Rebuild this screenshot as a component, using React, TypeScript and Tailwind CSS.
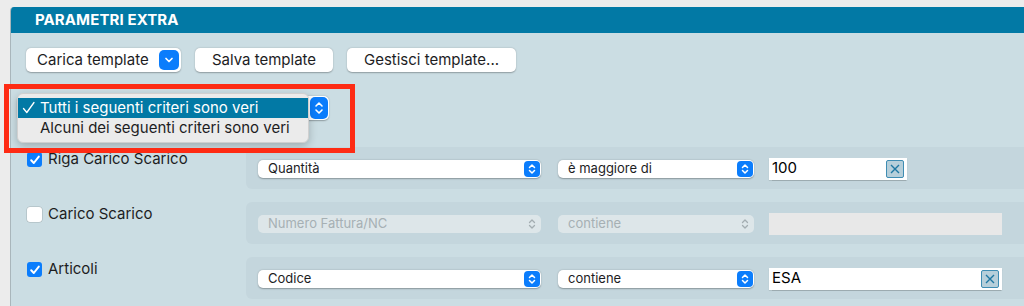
import type { ReactNode } from "react"

const font = { fontFamily: "Inter, 'Liberation Sans', sans-serif" }

function Stepper({ disabled = false }: { disabled?: boolean }) {
  if (disabled) {
    return (
      <svg width="16" height="16" viewBox="0 0 16 16" className="shrink-0">
        <path d="M5.5 6.5 8 4l2.5 2.5M5.5 9.5 8 12l2.5-2.5" fill="none" stroke="#a3adb1" strokeWidth="1.3" strokeLinecap="round" strokeLinejoin="round" />
      </svg>
    )
  }
  return (
    <div className="flex h-[16px] w-[16px] shrink-0 items-center justify-center rounded-[4px] bg-[#0b7dfc]">
      <svg width="16" height="16" viewBox="0 0 16 16">
        <path d="M5.5 6.5 8 4l2.5 2.5M5.5 9.5 8 12l2.5-2.5" fill="none" stroke="#fff" strokeWidth="1.5" strokeLinecap="round" strokeLinejoin="round" />
      </svg>
    </div>
  )
}

function Select({ label, width, disabled = false }: { label: string; width: string; disabled?: boolean }) {
  return (
    <div
      className={`flex h-[18px] ${width} shrink-0 items-center justify-between rounded-[5px] pl-[10px] pr-[1px] text-[13px] ${
        disabled ? "bg-[#dde6e9] text-[#a6b0b4]" : "bg-white text-[#1d1d1f] shadow-[0_0.5px_1.5px_rgba(0,0,0,0.3)]"
      }`}
    >
      <span>{label}</span>
      <Stepper disabled={disabled} />
    </div>
  )
}

function ClearButton() {
  return (
    <div className="flex h-[18px] w-[18px] items-center justify-center rounded-[2px] border border-[#3f8db3] bg-[#b6cfda]">
      <svg width="12" height="12" viewBox="0 0 12 12">
        <path d="M2 2l8 8M10 2l-8 8" stroke="#1e78a3" strokeWidth="1.4" />
      </svg>
    </div>
  )
}

function TextInput({ value, width, disabled = false }: { value?: string; width: string; disabled?: boolean }) {
  return (
    <div
      className={`flex h-[22px] ${width} shrink-0 items-center justify-between pl-[3px] pr-[3px] text-[15px] text-black ${
        disabled ? "bg-[#e8e8e8]" : "bg-white shadow-[0_0.5px_1px_rgba(0,0,0,0.2)]"
      }`}
    >
      <span>{value}</span>
      {value && <ClearButton />}
    </div>
  )
}

function Checkbox({ checked }: { checked: boolean }) {
  if (!checked) {
    return <div className="h-[15px] w-[15px] shrink-0 rounded-[3px] bg-white shadow-[0_0_0_0.5px_rgba(0,0,0,0.2)]" />
  }
  return (
    <div className="flex h-[15px] w-[15px] shrink-0 items-center justify-center rounded-[3px] bg-[#0b7dfc]">
      <svg width="12" height="12" viewBox="0 0 12 12">
        <path d="M2.2 6.3 4.8 9 9.8 2.6" fill="none" stroke="#fff" strokeWidth="2" strokeLinecap="round" strokeLinejoin="round" />
      </svg>
    </div>
  )
}

function CriteriaRow({ label, checked, children }: { label: string; checked: boolean; children: ReactNode }) {
  return (
    <div className="flex h-[42px]">
      <div className="flex w-[235px] shrink-0 items-start gap-[6px] pl-[16px] pt-[5px]">
        <Checkbox checked={checked} />
        <span className="mt-[-3px] text-[15px] leading-[20px] text-[#1d1d1f]">{label}</span>
      </div>
      <div className="flex flex-1 items-center rounded-l-[6px] bg-[#c4d6dd] pl-[12px] pt-[1px]">{children}</div>
    </div>
  )
}

function Button({ children, className = "" }: { children: ReactNode; className?: string }) {
  return (
    <div
      className={`flex h-[24px] items-center rounded-[5px] bg-white text-[15px] text-[#1d1d1f] shadow-[0_0.5px_1.5px_rgba(0,0,0,0.3)] ${className}`}
    >
      {children}
    </div>
  )
}

export default function App() {
  return (
    <div className="relative flex h-[306px] w-[1024px] overflow-hidden bg-[#ececec] pl-[10px] pt-[7px]" style={font}>
      <div className="flex flex-1 flex-col overflow-hidden rounded-tl-[4px] border-l border-[#a9b6bb] bg-[#cbdde3]">
        <div className="flex h-[26px] shrink-0 items-center bg-[#0279a5] pl-[24px] text-[15px] font-bold tracking-[0.1px] text-white">
          PARAMETRI EXTRA
        </div>

        <div className="relative flex flex-col">
          <div className="ml-[15px] mt-[15px] flex gap-[14px]">
            <Button className="w-[155px] justify-between pl-[11px] pr-[2px]">
              <span>Carica template</span>
              <div className="flex h-[20px] w-[20px] items-center justify-center rounded-[5px] bg-[#0b7dfc]">
                <svg width="12" height="12" viewBox="0 0 12 12">
                  <path d="M3 4.5 6 7.5 9 4.5" fill="none" stroke="#fff" strokeWidth="1.7" strokeLinecap="round" strokeLinejoin="round" />
                </svg>
              </div>
            </Button>
            <Button className="w-[138px] justify-center">Salva template</Button>
            <Button className="w-[169px] justify-center">Gestisci template...</Button>
          </div>

          {/* popup button under the open menu */}
          <div className="ml-[6px] mt-[24px] flex h-[24px] w-[312px] items-center justify-end rounded-[5px] bg-white pr-[1px] shadow-[0_0.5px_1.5px_rgba(0,0,0,0.3)]">
            <div className="flex h-[22px] w-[18px] items-center justify-center rounded-[5px] bg-[#0b7dfc]">
              <svg width="14" height="18" viewBox="0 0 14 18">
                <path d="M4 7 7 4l3 3M4 11l3 3 3-3" fill="none" stroke="#fff" strokeWidth="1.6" strokeLinecap="round" strokeLinejoin="round" />
              </svg>
            </div>
          </div>

          <div className="mt-[27px] flex flex-col gap-[13px]">
            <CriteriaRow label="Riga Carico Scarico" checked>
              <Select label="Quantità" width="w-[283px]" />
              <div className="w-[17px]" />
              <Select label="è maggiore di" width="w-[196px]" />
              <div className="w-[15px]" />
              <TextInput value="100" width="w-[138px]" />
            </CriteriaRow>
            <CriteriaRow label="Carico Scarico" checked={false}>
              <Select label="Numero Fattura/NC" width="w-[283px]" disabled />
              <div className="w-[17px]" />
              <Select label="contiene" width="w-[196px]" disabled />
              <div className="w-[15px]" />
              <TextInput width="w-[233px]" disabled />
            </CriteriaRow>
            <CriteriaRow label="Articoli" checked>
              <Select label="Codice" width="w-[283px]" />
              <div className="w-[17px]" />
              <Select label="contiene" width="w-[196px]" />
              <div className="w-[15px]" />
              <TextInput value="ESA" width="w-[233px]" />
            </CriteriaRow>
          </div>

          {/* open menu */}
          <div className="absolute left-[6px] top-[60px] flex h-[50px] w-[292px] flex-col rounded-[6px] border border-[#d0d0d0] bg-[#ebebeb] pt-[4px] text-[15px] shadow-[0_3px_8px_rgba(0,0,0,0.22)]">
            <div className="flex h-[20px] items-center bg-[#0279a5] pl-[4px] text-white">
              <svg width="14" height="14" viewBox="0 0 14 14" className="mr-[4px]">
                <path d="M1.5 7.5 4.8 11.5 12 1.5" fill="none" stroke="#fff" strokeWidth="1.3" strokeLinecap="round" strokeLinejoin="round" />
              </svg>
              <span>Tutti i seguenti criteri sono veri</span>
            </div>
            <div className="flex h-[20px] items-center pl-[22px] text-[#1d1d1f]">Alcuni dei seguenti criteri sono veri</div>
          </div>
        </div>
      </div>

      {/* red highlight */}
      <div className="absolute left-[4px] top-[84px] h-[69px] w-[351px] border-[5px] border-[#fe2b14]" />
    </div>
  )
}
